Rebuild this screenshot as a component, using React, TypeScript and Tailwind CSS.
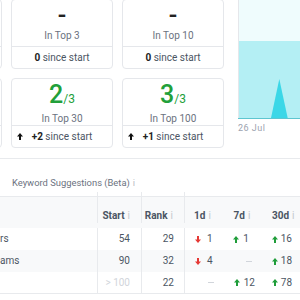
import React from "react";

function Arrow({ dir, className }: { dir: "up" | "down"; className: string }) {
  return (
    <svg width="6" height="7" viewBox="0 0 6 7" className={"shrink-0 " + className}>
      <path
        d={
          dir === "up"
            ? "M3 0 L6 3.4 L4 3.4 L4 7 L2 7 L2 3.4 L0 3.4 Z"
            : "M3 7 L6 3.6 L4 3.6 L4 0 L2 0 L2 3.6 L0 3.6 Z"
        }
      />
    </svg>
  );
}

type CardProps = {
  value?: string;
  total?: string;
  label?: string;
  delta?: string;
  arrow?: boolean;
};

function Card({ value, total, label, delta, arrow }: CardProps) {
  const dash = value === "-";
  return (
    <div className="flex h-[70px] flex-col rounded-[4px] border border-[#e5e7eb] bg-white">
      <div className="flex h-[46px] flex-col items-center pt-[2px]">
        {value && (
          <div className="flex items-baseline leading-[28px]">
            <span
              className={
                dash
                  ? "text-[25px] font-medium text-[#222222]"
                  : "text-[25px] font-medium text-[#22a03a]"
              }
            >
              {value}
            </span>
            {total && <span className="text-[12px] text-[#22a03a]">/{total}</span>}
          </div>
        )}
        {label && <div className="mt-[-1px] text-[10px] leading-[14px] text-[#6b7280]">{label}</div>}
      </div>
      <div className="grid flex-1 grid-cols-[1fr_auto_1fr] items-center border-t border-[#e5e7eb] text-[10px] leading-[14px] text-[#4b5563]">
        <div className="flex pl-[5px]">{arrow && <Arrow dir="up" className="fill-[#111111]" />}</div>
        <div>
          {delta && (
            <>
              <span className="font-bold text-[#222222]">{delta}</span> since start
            </>
          )}
        </div>
        <div />
      </div>
    </div>
  );
}

function Info() {
  return <span className="ml-[3px] font-normal text-[#c4c8cc]">i</span>;
}

type Delta = { dir?: "up" | "down"; v?: string };

function DeltaCell({ d, gap }: { d: Delta; gap: string }) {
  if (!d.v) {
    return (
      <div className="flex w-[39.5px] items-center pl-[23px]">
        <div className="h-[1px] w-[6px] bg-[#d1d5db]" />
      </div>
    );
  }
  return (
    <div className={"flex w-[39.5px] items-center pl-[10px] " + gap}>
      <Arrow
        dir={d.dir!}
        className={d.dir === "up" ? "fill-[#1f9d3a]" : "fill-[#e53935]"}
      />
      <span>{d.v}</span>
    </div>
  );
}

const rows: {
  kw: string;
  start: string;
  rank: string;
  d1: Delta;
  d7: Delta;
  d30: Delta;
  bg: string;
}[] = [
  { kw: "rs", start: "54", rank: "29", d1: { dir: "down", v: "1" }, d7: { dir: "up", v: "1" }, d30: { dir: "up", v: "16" }, bg: "bg-white" },
  { kw: "ams", start: "90", rank: "32", d1: { dir: "down", v: "4" }, d7: {}, d30: { dir: "up", v: "18" }, bg: "bg-[#f8f9fa]" },
  { kw: "", start: "> 100", rank: "22", d1: {}, d7: { dir: "up", v: "12" }, d30: { dir: "up", v: "78" }, bg: "bg-white" },
];

export default function App() {
  return (
    <div className="h-[300px] w-[300px] overflow-hidden bg-white font-['Roboto',sans-serif]">
      <div className="border-b border-[#e8eaed] pb-[10px]">
        <div className="ml-[-100px] mt-[-1px] flex">
          <div className="grid shrink-0 grid-cols-[102px_102px_102px] gap-[9px]">
            <Card />
            <Card value="-" label="In Top 3" delta="0" />
            <Card value="-" label="In Top 10" delta="0" />
            <Card />
            <Card value="2" total="3" label="In Top 30" delta="+2" arrow />
            <Card value="3" total="3" label="In Top 100" delta="+1" arrow />
          </div>
          <div className="ml-[14px] flex shrink-0 flex-col">
            <svg width="80" height="120" viewBox="0 0 80 120" className="block">
              <rect x="0" y="0" width="80" height="42" fill="#effcfd" />
              <rect x="0" y="42" width="80" height="77" fill="#b4eff4" />
              <polygon points="33,119 41.3,80 49.7,119" fill="#3bd7e7" />
              <line x1="0" y1="119.5" x2="80" y2="119.5" stroke="#5ec6d0" strokeWidth="1" />
              <line x1="0.5" y1="0" x2="0.5" y2="119" stroke="#e5e7eb" strokeWidth="1" />
            </svg>
            <div className="mt-[3px] text-[9px] leading-[12px] tracking-[0.5px] text-[#9ca3af]">26 Jul</div>
          </div>
        </div>
      </div>

      <div className="h-[37px] pl-[12px] pt-[17px] text-[9.4px] leading-[14px] text-[#6b7280]">
        Keyword Suggestions (Beta)
        <span className="ml-[3px] text-[#b8bcc2]">i</span>
      </div>

      <div className="border-t border-[#e8eaed] text-[10px] leading-[14px]">
        <div className="flex h-[31px] items-end bg-[#f8f9fa] pb-[5px] font-bold text-[#4b5563]">
          <div className="h-[31px] w-[98px] shrink-0 border-r border-[#e8eaed]" />
          <div className="flex h-[31px] w-[44px] shrink-0 items-end justify-end border-r border-[#e8eaed] pr-[11px]">
            <span className="mb-[-5px] pb-[5px]">Start<Info /></span>
          </div>
          <div className="flex h-[31px] w-[43px] shrink-0 items-end justify-end border-r border-[#e8eaed] pr-[11px]">
            <span className="mb-[-5px] pb-[5px]">Rank<Info /></span>
          </div>
          <div className="w-[39.5px] shrink-0 pl-[9px]">1d<Info /></div>
          <div className="w-[39.5px] shrink-0 pl-[9px]">7d<Info /></div>
          <div className="w-[39.5px] shrink-0 pl-[8px]">30d<Info /></div>
        </div>
        {rows.map((r, i) => (
          <div
            key={i}
            className={
              "flex text-[#4b5563] " +
              r.bg +
              (i === rows.length - 1 ? " h-[22px] border-b border-[#e8eaed]" : " h-[22px]")
            }
          >
            <div className="flex w-[98px] shrink-0 items-center border-r border-[#e8eaed] whitespace-nowrap">
              {r.kw}
            </div>
            <div
              className={
                "flex w-[44px] shrink-0 items-center justify-end border-r border-[#e8eaed] pr-[11px] " +
                (r.start.startsWith(">") ? "text-[#d1d5db]" : "")
              }
            >
              {r.start}
            </div>
            <div className="flex w-[43px] shrink-0 items-center justify-end border-r border-[#e8eaed] pr-[10px]">
              {r.rank}
            </div>
            <DeltaCell d={r.d1} gap="gap-[6px]" />
            <DeltaCell d={r.d7} gap="gap-[4px]" />
            <DeltaCell d={r.d30} gap="gap-[3px]" />
          </div>
        ))}
      </div>
    </div>
  );
}
